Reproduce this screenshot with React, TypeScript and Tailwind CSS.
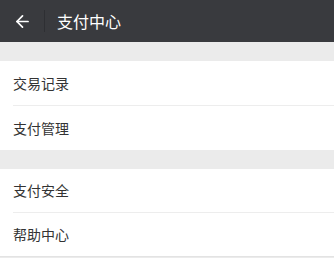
import { ArrowLeft } from "lucide-react";

export default function App() {
  return (
    <div
      className="w-[334px] h-[258px] bg-[#ebebeb] overflow-hidden"
      style={{ fontFamily: '"Noto Sans CJK SC", "Noto Sans", sans-serif' }}
    >
      <div className="flex h-[42px] items-center bg-[#393a3e]">
        <div className="flex w-[44px] justify-center pl-[1px]">
          <ArrowLeft className="h-[19px] w-[19px] text-white" strokeWidth={2.2} />
        </div>
        <div className="h-[22px] w-px bg-[#2e2f33]" />
        <span className="ml-[12px] text-[16px] text-white">支付中心</span>
      </div>

      <div className="mt-[19px] bg-white">
        <div className="pl-[13px]">
          <div className="flex h-[45px] items-center border-b border-[#ededed] text-[14px] text-[#333]">
            交易记录
          </div>
        </div>
        <div className="flex h-[44px] items-center pl-[13px] text-[14px] text-[#333]">支付管理</div>
      </div>

      <div className="mt-[19px] border-b border-[#e3e3e3] bg-white">
        <div className="pl-[13px]">
          <div className="flex h-[44px] items-center border-b border-[#ededed] text-[14px] text-[#333]">
            支付安全
          </div>
        </div>
        <div className="flex h-[43px] items-center pl-[13px] text-[14px] text-[#333]">帮助中心</div>
      </div>
    </div>
  );
}
